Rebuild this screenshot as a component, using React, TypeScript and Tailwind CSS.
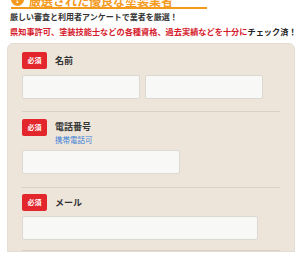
const jp = { fontFamily: '"Noto Sans CJK JP", "Noto Sans", sans-serif' };

function Badge() {
  return (
    <span className="flex h-[17px] w-[25px] shrink-0 items-center justify-center rounded-[2px] bg-[#e2262b] text-[7px] font-bold leading-none text-white">
      必須
    </span>
  );
}

function Field({ className }: { className: string }) {
  return <div className={`h-[24px] rounded-[2px] border border-[#dcd8d2] bg-[#f8f8f7] ${className}`} />;
}

export default function App() {
  return (
    <div className="h-[255px] w-[300px] overflow-hidden bg-white" style={jp}>
      {/* heading, cut off at the top */}
      <div className="relative ml-[11px] mt-[-7px] flex h-[16px] w-[196px] items-end border-b-2 border-[#f39a1c]">
        <span className="mb-[1px] flex h-[13px] w-[13px] items-center justify-center rounded-full bg-[#f39a1c] text-[9px] font-bold leading-none text-white">
          !
        </span>
        <span className="ml-[5px] text-[12px] font-bold leading-none text-[#f39a1c]">厳選された優良な塗装業者</span>
      </div>

      <p className="ml-[10px] mt-[1px] text-[8px] font-bold leading-[14px] text-[#333]">厳しい審査と利用者アンケートで業者を厳選！</p>
      <p className="ml-[10px] text-[8.2px] font-bold leading-[14px] text-[#d51a2b]">
        県知事許可、塗装技能士などの各種資格、過去実績などを十分に<span className="text-[#222]">チェック済！</span>
      </p>

      <div className="ml-[7px] mt-[5px] w-[288px] rounded-t-[6px] border border-[#e5ddd2] bg-[#ede5da] px-[14px] pt-[8px]">
        <div className="border-b border-[#d9d1c6] pb-[12px]">
          <div className="flex items-center gap-[8px]">
            <Badge />
            <span className="text-[9px] font-bold text-[#333]">名前</span>
          </div>
          <div className="mt-[6px] flex gap-[5px]">
            <Field className="w-[118px]" />
            <Field className="w-[118px]" />
          </div>
        </div>

        <div className="border-b border-[#d9d1c6] pb-[13px] pt-[7px]">
          <div className="flex items-start gap-[8px]">
            <Badge />
            <div className="flex flex-col">
              <span className="text-[9px] font-bold leading-[16px] text-[#333]">電話番号</span>
              <span className="text-[7.5px] leading-[10px] text-[#3b7fd6]">携帯電話可</span>
            </div>
          </div>
          <Field className="mt-[5px] w-[158px]" />
        </div>

        <div className="border-b border-[#d9d1c6] pb-[10px] pt-[6px]">
          <div className="flex items-center gap-[8px]">
            <Badge />
            <span className="text-[9px] font-bold text-[#333]">メール</span>
          </div>
          <Field className="mt-[5px] w-[236px]" />
        </div>
      </div>
    </div>
  );
}
